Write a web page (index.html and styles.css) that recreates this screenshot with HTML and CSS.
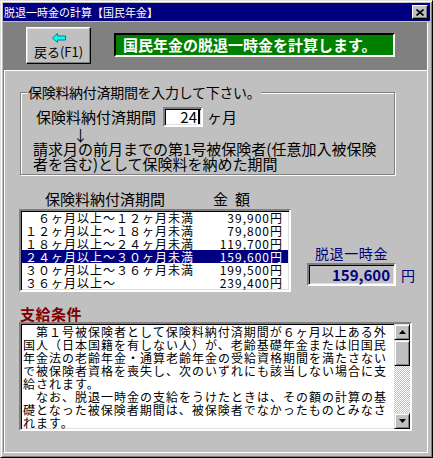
FILE: index.html
```html
<!DOCTYPE html>
<html lang="ja">
<head>
<meta charset="utf-8">
<title>脱退一時金の計算【国民年金】</title>
<link rel="stylesheet" href="styles.css">
</head>
<body>
<div class="window">
  <div class="titlebar">
    <span class="title">脱退一時金の計算【国民年金】</span>
    <span class="close"><svg width="8" height="7" viewBox="0 0 8 7"><path d="M0.5 0.5 L7.5 6.5 M7.5 0.5 L0.5 6.5" stroke="#000" stroke-width="1.6" fill="none"/></svg></span>
  </div>
  <div class="client">
    <div class="toolbar">
      <div class="btn-back">
        <svg class="arrow" width="14" height="10" viewBox="0 0 14 10"><polygon points="0.5,5 5.5,0.5 5.5,3 13.5,3 13.5,7 5.5,7 5.5,9.5" fill="#00ffff" stroke="#008080" stroke-width="1"/></svg>
        <span class="btn-label">戻る(F1)</span>
      </div>
      <div class="banner">国民年金の脱退一時金を計算します。</div>
    </div>
    <div class="panel">
      <fieldset class="group">
        <legend>保険料納付済期間を入力して下さい。</legend>
        <div class="input-row">
          <span class="lbl">保険料納付済期間</span>
          <span class="field">24<span class="caret"></span></span>
          <span class="unit">ヶ月</span>
        </div>
        <div class="arrow-down">↓</div>
        <div class="note">請求月の前月までの第1号被保険者(任意加入被保険</div>
        <div class="note">者を含む)として保険料を納めた期間</div>
      </fieldset>
      <div class="table-area">
        <div class="left">
          <div class="thead"><span class="th1">保険料納付済期間</span><span class="th2">金<span class="sp"></span>額</span></div>
          <div class="listbox">
            <div class="row"><span>　６ヶ月以上～１２ヶ月未満</span><span class="amt">39,900円</span></div>
            <div class="row"><span>１２ヶ月以上～１８ヶ月未満</span><span class="amt">79,800円</span></div>
            <div class="row"><span>１８ヶ月以上～２４ヶ月未満</span><span class="amt">119,700円</span></div>
            <div class="row sel"><span>２４ヶ月以上～３０ヶ月未満</span><span class="amt">159,600円</span></div>
            <div class="row"><span>３０ヶ月以上～３６ヶ月未満</span><span class="amt">199,500円</span></div>
            <div class="row"><span>３６ヶ月以上～</span><span class="amt">239,400円</span></div>
          </div>
        </div>
        <div class="right">
          <div class="res-label">脱退一時金</div>
          <div class="res-row"><div class="res-box">159,600</div><span class="yen">円</span></div>
        </div>
      </div>
      <div class="cond-title">支給条件</div>
      <div class="textbox">
        <div class="text">
          <div>　第１号被保険者として保険料納付済期間が６ヶ月以上ある外</div>
          <div>国人（日本国籍を有しない人）が、老齢基礎年金または旧国民</div>
          <div>年金法の老齢年金・通算老齢年金の受給資格期間を満たさない</div>
          <div>で被保険者資格を喪失し、次のいずれにも該当しない場合に支</div>
          <div>給されます。</div>
          <div>　なお、脱退一時金の支給をうけたときは、その額の計算の基</div>
          <div>礎となった被保険者期間は、被保険者でなかったものとみなさ</div>
          <div>れます。</div>
        </div>
        <div class="scrollbar">
          <div class="sb-btn"><svg width="7" height="4" viewBox="0 0 7 4"><polygon points="3.5,0 7,4 0,4" fill="#000"/></svg></div>
          <div class="sb-thumb"></div>
          <div class="sb-track"></div>
          <div class="sb-btn"><svg width="7" height="4" viewBox="0 0 7 4"><polygon points="0,0 7,0 3.5,4" fill="#000"/></svg></div>
        </div>
      </div>
    </div>
  </div>
</div>
</body>
</html>
```
FILE: styles.css
```css
* { box-sizing: border-box; }
body {
  margin: 0;
  background: #c0c0c0;
  font-family: "Noto Sans CJK JP", "Noto Sans", sans-serif;
  color: #000;
}
.window {
  width: 433px;
  height: 458px;
  border: 1px solid;
  border-color: #dfdfdf #000 #000 #dfdfdf;
  box-shadow: inset 1px 1px 0 #fff, inset -1px -1px 0 #808080;
  padding: 2px;
  background: #c0c0c0;
  display: flex;
  flex-direction: column;
}
.titlebar {
  height: 18px;
  margin-bottom: 1px;
  background: #000080;
  color: #fff;
  display: flex;
  align-items: center;
  justify-content: space-between;
  padding: 0 2px 0 1px;
  flex-shrink: 0;
}
.title { font-size: 11px; line-height: 18px; white-space: nowrap; }
.close {
  width: 16px;
  height: 14px;
  background: #c0c0c0;
  border: 1px solid;
  border-color: #fff #000 #000 #fff;
  box-shadow: inset -1px -1px 0 #808080;
  display: flex;
  align-items: center;
  justify-content: center;
}
.close svg { display: block; }
.client {
  width: 425px;
  height: 431px;
  border: 1px solid;
  border-color: #808080 #fff #fff #808080;
  display: flex;
  flex-direction: column;
  flex-shrink: 0;
}
.toolbar {
  height: 47px;
  flex-shrink: 0;
  background: #808080;
  display: flex;
  align-items: flex-start;
  padding: 4px 0 0 22px;
}
.btn-back {
  width: 65px;
  height: 37px;
  background: #c0c0c0;
  border: 1px solid;
  border-color: #fff #000 #000 #fff;
  box-shadow: inset -1px -1px 0 #808080, inset 1px 1px 0 #dfdfdf;
  display: flex;
  flex-direction: column;
  align-items: center;
}
.arrow { display: block; margin-top: 5px; }
.btn-label { font-size: 13px; line-height: 14px; margin-top: 2px; white-space: nowrap; }
.banner {
  margin: 6px 0 0 23px;
  width: 281px;
  height: 24px;
  background: #008000;
  border: 2px solid;
  border-color: #000 #fff #fff #000;
  color: #fff;
  font-weight: bold;
  font-size: 15px;
  line-height: 20px;
  padding-left: 7px;
  white-space: nowrap;
}
.panel {
  flex: 1;
  border-top: 1px solid #fff;
  border-left: 1px solid #fff;
  padding-left: 14px;
}
.group {
  margin: 14px 0 0 1px;
  padding: 0 0 3px 0;
  width: 375px;
  min-width: 0;
  border: 1px solid #808080;
  box-shadow: 1px 1px 0 #fff, inset 1px 1px 0 #fff;
}
.group legend {
  margin-left: 6px;
  padding: 0 1px;
  font-size: 14px;
  line-height: 14px;
  letter-spacing: -0.3px;
  background: #c0c0c0;
  white-space: nowrap;
}
.input-row {
  display: flex;
  align-items: center;
  height: 22px;
  margin-top: 7px;
  padding-left: 15px;
  font-size: 15px;
  line-height: 16px;
}
.field {
  margin-left: 7px;
  width: 40px;
  height: 20px;
  border: 2px solid;
  border-color: #808080 #fff #fff #808080;
  box-shadow: inset 1px 1px 0 #000, inset -1px -1px 0 #dfdfdf;
  background: #fff;
  display: flex;
  align-items: center;
  justify-content: flex-end;
  padding-right: 1px;
  font-size: 15px;
  line-height: 16px;
}
.caret { width: 2px; height: 14px; background: #000; margin-left: 1px; }
.unit { margin-left: 4px; }
.arrow-down {
  height: 13px;
  line-height: 13px;
  font-size: 15px;
  padding-left: 52px;
}
.note {
  padding-left: 12px;
  font-size: 15px;
  line-height: 15px;
  white-space: nowrap;
}
.table-area { display: flex; margin-top: 16px; }
.thead {
  height: 16px;
  line-height: 16px;
  font-size: 15px;
  display: flex;
  padding-left: 26px;
  white-space: nowrap;
}
.th2 { margin-left: 48px; display: flex; }
.sp { display: inline-block; width: 7px; }
.listbox {
  margin-top: 2px;
  width: 272px;
  height: 83px;
  border: 2px solid;
  border-color: #808080 #fff #fff #808080;
  box-shadow: inset 1px 1px 0 #000, inset -1px -1px 0 #dfdfdf;
  background: #fff;
  padding: 0 1px;
}
.row {
  display: flex;
  justify-content: space-between;
  height: 13px;
  line-height: 13px;
  font-size: 12px;
  letter-spacing: 1px;
  padding: 0 5px 0 3px;
  white-space: nowrap;
}
.row.sel { background: #000080; color: #fff; }
.right { margin-left: 16px; padding-top: 54px; }
.res-label {
  font-size: 14px;
  line-height: 16px;
  letter-spacing: 0.6px;
  color: #000080;
  padding-left: 8px;
  white-space: nowrap;
}
.res-row { display: flex; align-items: center; margin-top: 2px; }
.res-box {
  width: 89px;
  height: 23px;
  border: 2px solid;
  border-color: #808080 #fff #fff #808080;
  box-shadow: inset 1px 1px 0 #000, inset -1px -1px 0 #dfdfdf;
  background: #c0c0c0;
  text-align: right;
  padding-right: 4px;
  font-weight: bold;
  font-size: 15px;
  line-height: 19px;
  color: #000080;
}
.yen { margin-left: 5px; font-size: 14px; line-height: 16px; color: #000080; }
.cond-title {
  margin-top: 14px;
  padding-left: 1px;
  font-size: 15px;
  font-weight: bold;
  line-height: 16px;
  letter-spacing: 0.5px;
  color: #800000;
}
.textbox {
  width: 393px;
  height: 109px;
  border: 2px solid;
  border-color: #808080 #fff #fff #808080;
  box-shadow: inset 1px 1px 0 #000, inset -1px -1px 0 #dfdfdf;
  background: #fff;
  display: flex;
}
.text {
  flex: 1;
  padding: 1px 0 0 2px;
  font-size: 12px;
  line-height: 13px;
  letter-spacing: 1px;
  white-space: nowrap;
}
.scrollbar { width: 16px; display: flex; flex-direction: column; }
.sb-btn, .sb-thumb {
  width: 16px;
  background: #c0c0c0;
  border: 1px solid;
  border-color: #dfdfdf #000 #000 #dfdfdf;
  box-shadow: inset 1px 1px 0 #fff, inset -1px -1px 0 #808080;
}
.sb-btn { height: 16px; display: flex; align-items: center; justify-content: center; flex-shrink: 0; }
.sb-btn svg { display: block; }
.sb-thumb { height: 26px; flex-shrink: 0; }
.sb-track {
  flex: 1;
  background: repeating-conic-gradient(#c0c0c0 0% 25%, #fff 0% 50%) 0 0 / 2px 2px;
}
```
